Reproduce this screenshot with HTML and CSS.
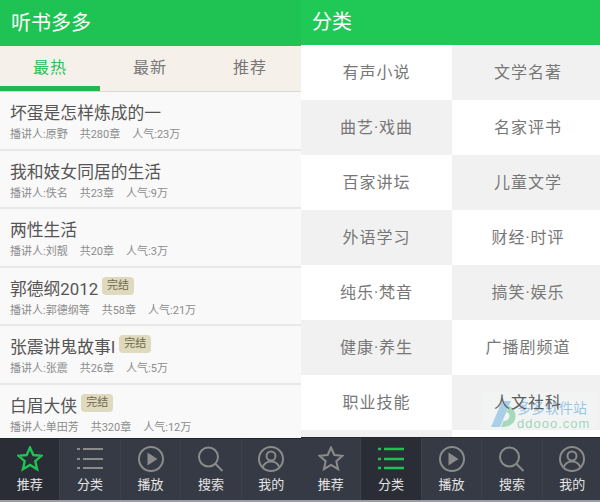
FILE: index.html
```html
<!DOCTYPE html>
<html>
<head>
    <meta charset="utf-8">
    <title>听书多多</title>
    <link rel="stylesheet" href="styles.css">
</head>
<body>
<div class="screens">
    <div class="phone">
        <div class="topbar">听书多多</div>
        <div class="tabs">
            <div class="tab active">最热</div>
            <div class="tab">最新</div>
            <div class="tab">推荐</div>
        </div>
        <div class="list">
            <div class="book">
                <div class="title">坏蛋是怎样炼成的一</div>
                <div class="meta"><span>播讲人:原野</span><span>共280章</span><span>人气:23万</span></div>
            </div>
            <div class="book">
                <div class="title">我和妓女同居的生活</div>
                <div class="meta"><span>播讲人:佚名</span><span>共23章</span><span>人气:9万</span></div>
            </div>
            <div class="book">
                <div class="title">两性生活</div>
                <div class="meta"><span>播讲人:刘靓</span><span>共20章</span><span>人气:3万</span></div>
            </div>
            <div class="book">
                <div class="title">郭德纲2012<em class="done">完结</em></div>
                <div class="meta"><span>播讲人:郭德纲等</span><span>共58章</span><span>人气:21万</span></div>
            </div>
            <div class="book">
                <div class="title">张震讲鬼故事I<em class="done">完结</em></div>
                <div class="meta"><span>播讲人:张震</span><span>共26章</span><span>人气:5万</span></div>
            </div>
            <div class="book">
                <div class="title">白眉大侠<em class="done">完结</em></div>
                <div class="meta"><span>播讲人:单田芳</span><span>共320章</span><span>人气:12万</span></div>
            </div>
        </div>
        <div class="nav">
            <div class="nav-item current">
                <svg viewBox="0 0 26 26"><path class="green" d="M13 1.500l3.300 7.500 8.200.8-6.200 5.400 1.800 8-7.100-4.200-7.100 4.200 1.800-8-6.200-5.400 8.200-.8z"/></svg>
                <span>推荐</span>
            </div>
            <div class="nav-item">
                <svg viewBox="0 0 26 26"><path d="M0 3h3M6 3h20M0 13h3M6 13h20M0 22h3M6 22h20"/></svg>
                <span>分类</span>
            </div>
            <div class="nav-item">
                <svg viewBox="0 0 26 26"><circle cx="13" cy="13" r="12"/><path class="solid" d="M9.500 6.500l10 6.500-10 6.500z"/></svg>
                <span>播放</span>
            </div>
            <div class="nav-item">
                <svg viewBox="0 0 26 26"><circle cx="10.500" cy="11" r="9.500"/><path d="M17.500 18l7 7"/></svg>
                <span>搜索</span>
            </div>
            <div class="nav-item">
                <svg viewBox="0 0 26 26"><circle cx="13" cy="13" r="12"/><circle cx="13" cy="10" r="4.500"/><path d="M4.500 21.500c1.500-4 4.500-6 8.500-6s7 2 8.500 6"/></svg>
                <span>我的</span>
            </div>
        </div>
    </div>

    <div class="phone right">
        <div class="topbar small">分类</div>
        <div class="cats">
            <div class="cat">有声小说</div>
            <div class="cat grey">文学名著</div>
            <div class="cat grey">曲艺·戏曲</div>
            <div class="cat">名家评书</div>
            <div class="cat">百家讲坛</div>
            <div class="cat grey">儿童文学</div>
            <div class="cat grey">外语学习</div>
            <div class="cat">财经·时评</div>
            <div class="cat">纯乐·梵音</div>
            <div class="cat grey">搞笑·娱乐</div>
            <div class="cat grey">健康·养生</div>
            <div class="cat">广播剧频道</div>
            <div class="cat">职业技能</div>
            <div class="cat grey"><span class="over">人文社科</span></div>
            <div class="cat stub grey"></div>
            <div class="cat stub"></div>
        </div>
        <div class="watermark">
            <svg viewBox="0 0 26 28"><path class="wm-blue" d="M0 27L11 1h9L9 27z"/><path class="wm-green" d="M10 27c9 0 15-4 14.500-12-.3-4-2.500-7-6-9l-3 6c2 1 3 2 3 4 0 3-3 5-6 5z"/></svg>
            <div class="wm-text"><b>多多软件站</b><i>ddooo.com</i></div>
        </div>
        <div class="nav">
            <div class="nav-item">
                <svg viewBox="0 0 26 26"><path d="M13 1.500l3.300 7.500 8.200.8-6.200 5.400 1.800 8-7.100-4.200-7.100 4.200 1.800-8-6.200-5.400 8.200-.8z"/></svg>
                <span>推荐</span>
            </div>
            <div class="nav-item current">
                <svg viewBox="0 0 26 26"><path class="green" d="M0 3h3M6 3h20M0 13h3M6 13h20M0 22h3M6 22h20"/></svg>
                <span>分类</span>
            </div>
            <div class="nav-item">
                <svg viewBox="0 0 26 26"><circle cx="13" cy="13" r="12"/><path class="solid" d="M9.500 6.500l10 6.500-10 6.500z"/></svg>
                <span>播放</span>
            </div>
            <div class="nav-item">
                <svg viewBox="0 0 26 26"><circle cx="10.500" cy="11" r="9.500"/><path d="M17.500 18l7 7"/></svg>
                <span>搜索</span>
            </div>
            <div class="nav-item">
                <svg viewBox="0 0 26 26"><circle cx="13" cy="13" r="12"/><circle cx="13" cy="10" r="4.500"/><path d="M4.500 21.500c1.500-4 4.500-6 8.500-6s7 2 8.500 6"/></svg>
                <span>我的</span>
            </div>
        </div>
    </div>
</div>
</body>
</html>
```

FILE: styles.css
```css
*{
    margin: 0;
    padding: 0;
    box-sizing: border-box;
}
body{
    width: 600px;
    height: 502px;
    overflow: hidden;
    background: #fff;
    font-family: Roboto, "Noto Sans CJK SC", sans-serif;
}
.screens{
    display: flex;
    height: 502px;
}
.phone{
    width: 301px;
    height: 502px;
    display: flex;
    flex-direction: column;
    background: #f9f9f9;
}
.phone.right{
    width: 299px;
    position: relative;
    background: #fff;
}
.topbar{
    height: 46px;
    flex: none;
    background: #1fc353;
    color: #fff;
    font-size: 20px;
    line-height: 46px;
    padding-left: 11px;
}
.topbar.small{
    height: 45px;
    line-height: 44px;
    background: #20c855;
}
.tabs{
    height: 46px;
    flex: none;
    display: flex;
    background: #f6f0ea;
    border-bottom: 1px solid #d8d8d4;
}
.tab{
    width: 100px;
    text-align: center;
    font-size: 16px;
    line-height: 44px;
    letter-spacing: 1px;
    color: #777;
}
.tab.active{
    color: #2cbf5c;
    border-bottom: 5px solid #1fb94e;
}
.list{
    flex: 1;
    min-height: 0;
    overflow: hidden;
}
.book{
    height: 58.5px;
    padding: 9px 10px 0;
    border-bottom: 2px solid #e8e8e8;
}
.title{
    font-size: 16.8px;
    line-height: 24px;
    color: #555;
    display: flex;
    align-items: flex-start;
}
.done{
    font-style: normal;
    font-size: 11px;
    line-height: 18px;
    height: 18px;
    padding: 0 5px;
    margin: 0 0 0 4px;
    border-radius: 4px;
    background: #dfd9bd;
    color: #6f6a50;
}
.meta{
    display: flex;
    gap: 12px;
    font-size: 11px;
    line-height: 16px;
    margin-top: 2px;
    color: #8c8c8c;
}
.nav{
    height: 64px;
    margin-top: auto;
    flex: none;
    display: flex;
    background: #363a44;
    border-top: 1px solid #23262c;
    border-bottom: 2px solid #9a9ea4;
}
.right .nav{
    width: 301px;
    height: 65px;
}
.nav-item{
    flex: 1;
    display: flex;
    flex-direction: column;
    align-items: center;
    padding-top: 7px;
    color: #e4e4e4;
    font-size: 13px;
    line-height: 16px;
    border-right: 1px solid #3d414c;
}
.right .nav-item{
    padding-top: 8px;
}
.nav-item:last-child{
    border-right: 0;
}
.nav-item.current{
    background: #2a2d35;
}
.nav-item svg{
    width: 26px;
    height: 26px;
    margin-bottom: 5px;
    fill: none;
    stroke: #8b8b8b;
    stroke-width: 2;
}
.nav-item svg .green{
    stroke: #1fc353;
    stroke-width: 2.4;
}
.nav-item svg .solid{
    fill: #8b8b8b;
    stroke: none;
}
.cats{
    display: grid;
    grid-template-columns: 151px 148px;
    grid-auto-rows: 55px;
    height: 392px;
    overflow: hidden;
}
.cat{
    display: flex;
    align-items: center;
    justify-content: center;
    padding-bottom: 3px;
    font-size: 16px;
    letter-spacing: 1px;
    color: #777;
    background: #fff;
}
.cat:nth-child(even){
    padding-left: 4px;
}
.cat.grey{
    background: #f1f1f1;
}
.over{
    position: relative;
    z-index: 2;
    color: #5c5c5c;
}
.watermark{
    position: absolute;
    left: 180px;
    top: 392px;
    width: 116px;
    height: 37px;
    display: flex;
    padding-left: 10px;
    background: rgba(245, 248, 248, 0.45);
}
.watermark svg{
    width: 26px;
    height: 28px;
    margin-top: 8px;
    flex: none;
}
.wm-blue{
    fill: #a9d0e8;
}
.wm-green{
    fill: #a6d9bb;
}
.wm-text{
    display: flex;
    flex-direction: column;
    font-size: 14px;
    line-height: 16px;
    padding-top: 8px;
}
.wm-text b{
    font-weight: 400;
    color: rgba(130, 185, 225, 0.8);
    white-space: nowrap;
}
.wm-text i{
    font-family: "Liberation Sans", sans-serif;
    font-style: normal;
    color: rgba(150, 210, 180, 0.9);
    letter-spacing: 1px;
    font-size: 13px;
}
```
